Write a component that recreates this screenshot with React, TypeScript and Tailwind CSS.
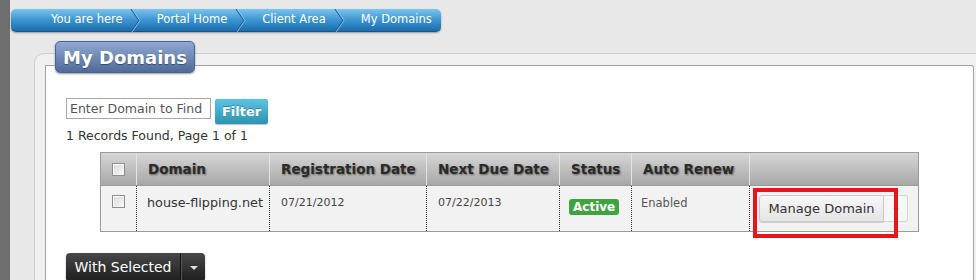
import React from "react";

const font = { fontFamily: '"DejaVu Sans", Verdana, sans-serif' };

function Chevron() {
  return (
    <svg width="14" height="23" viewBox="0 0 14 23" className="shrink-0">
      <polyline points="2,0 10,11.5 2,23" fill="none" stroke="#1a5b91" strokeWidth="1.2" />
      <polyline points="3,0 11,11.5 3,23" fill="none" stroke="#9fd3f2" strokeWidth="1" opacity="0.8" />
    </svg>
  );
}

function Checkbox() {
  return (
    <span className="inline-block h-[13px] w-[13px] border border-[#8f8f8f] bg-gradient-to-br from-[#d8d8d8] to-[#fafafa] shadow-[inset_1px_1px_0_#fff]" />
  );
}

const crumbs = ["Portal Home", "Client Area", "My Domains"];

const cols = [
  { label: "Domain", w: "w-[133px]" },
  { label: "Registration Date", w: "w-[157px]" },
  { label: "Next Due Date", w: "w-[133px]" },
  { label: "Status", w: "w-[72px]" },
  { label: "Auto Renew", w: "w-[118px]" },
  { label: "", w: "flex-1" },
];

export default function App() {
  return (
    <div className="flex h-[280px] w-[976px] overflow-hidden whitespace-nowrap bg-[#e8e8e8]" style={font}>
      <div className="w-[10px] shrink-0 bg-[#6e6e6e]" />
      <div className="flex min-w-0 flex-1 flex-col">
        {/* breadcrumb */}
        <div className="ml-px mt-[9px] flex h-[23px] items-center self-start rounded-[5px] border-b border-[#15558a] bg-gradient-to-b from-[#7cc5ec] via-[#3b95d2] to-[#1c6cab] pr-[2px] text-[11.5px] text-white shadow-[0_1px_2px_rgba(0,0,0,0.35)]">
          <span className="pl-[40px] pr-[6px]">You are here</span>
          <Chevron />
          {crumbs.map((c, i) => (
            <React.Fragment key={c}>
              <span className="pl-[14px] pr-[7px]">{c}</span>
              {i < crumbs.length - 1 && <Chevron />}
            </React.Fragment>
          ))}
        </div>

        {/* outer panel */}
        <div className="relative ml-[24px] mt-[21px] w-[980px] flex-1 rounded-tl-[10px] border border-[#cdcdcd] bg-[#f0f0f0] pl-[10px] pt-[11px]">
          <div className="absolute left-[20px] top-[-13px] flex h-[32px] w-[140px] items-center justify-center rounded-[5px] border border-[#4a6590] bg-gradient-to-b from-[#91a9d2] to-[#4f6b9b] text-[18px] font-bold text-white shadow-[0_1px_2px_rgba(0,0,0,0.4)] [text-shadow:0_1px_1px_rgba(0,0,0,0.4)]">
            My Domains
          </div>
          <div className="h-full w-[929px] rounded-tr-[3px] border-l border-r border-t border-[#a4a4a4] bg-white pl-[20px] pt-[32px]">
            {/* filter */}
            <div className="flex items-start gap-[4px]">
              <input
                placeholder="Enter Domain to Find"
                className="h-[21px] w-[145px] border border-[#a9a9a9] bg-white px-[3px] text-[12.5px] text-[#333] placeholder:text-[#555] outline-none"
              />
              <button className="mt-px h-[25px] w-[53px] rounded-[2px] bg-gradient-to-b from-[#5cc3e3] to-[#2d93b3] text-[13px] font-bold text-white shadow-[0_1px_1px_rgba(0,0,0,0.25)] [text-shadow:0_-1px_0_rgba(0,0,0,0.25)]">
                Filter
              </button>
            </div>
            <div className="mt-[3px] text-[12.5px] leading-[18px] text-[#333]">1 Records Found, Page 1 of 1</div>

            {/* table */}
            <div className="ml-[34px] mt-[7px] w-[819px] border border-[#9a9a9a]">
              <div className="flex h-[33px] border-b border-[#9a9a9a] bg-gradient-to-b from-[#d6d6d6] to-[#a8a8a8]">
                <div className="flex w-[36px] items-center justify-center border-r border-[#e4e4e4]">
                  <Checkbox />
                </div>
                {cols.map((c, i) => (
                  <div
                    key={i}
                    className={`${c.w} flex items-center px-[11px] text-[13.5px] font-bold text-[#2a2a2a] [text-shadow:1px_1px_2px_rgba(0,0,0,0.45)] ${i < cols.length - 1 ? "border-r border-[#e4e4e4]" : ""}`}
                  >
                    {c.label}
                  </div>
                ))}
              </div>
              <div className="flex h-[45px] bg-[#f2f2f2]">
                <div className="flex w-[36px] justify-center border-r border-dotted border-[#333] pt-[9px]">
                  <Checkbox />
                </div>
                <div className="w-[133px] border-r border-dotted border-[#333] pl-[10px] pt-[7px] text-[12.8px] text-[#333]">
                  house-flipping.net
                </div>
                <div className="w-[157px] border-r border-dotted border-[#333] pl-[11px] pt-[9px] text-[11px] text-[#444]">
                  07/21/2012
                </div>
                <div className="w-[133px] border-r border-dotted border-[#333] pl-[11px] pt-[9px] text-[11px] text-[#444]">
                  07/22/2013
                </div>
                <div className="w-[72px] border-r border-dotted border-[#333] pl-[9px] pt-[8px]">
                  <span className="inline-block rounded-[3px] bg-[#3fa33f] px-[4px] text-[12px] font-bold leading-[16px] text-white">
                    Active
                  </span>
                </div>
                <div className="w-[118px] border-r border-dotted border-[#333] pl-[9px] pt-[9px] text-[11.5px] text-[#555]">
                  Enabled
                </div>
                <div className="relative flex-1 pl-[9px] pt-[9px]">
                  <div className="flex h-[27px] w-[149px]">
                    <div className="flex w-[125px] items-center justify-center rounded-l-[3px] border border-[#c8c8c8] bg-gradient-to-b from-[#f7f7f7] to-[#e4e4e4] text-[13px] text-[#333] shadow-[0_1px_1px_rgba(0,0,0,0.15)]">
                      Manage Domain
                    </div>
                    <div className="flex w-[24px] items-center justify-center rounded-r-[3px] border border-l-0 border-[#d4d4d4] bg-[#f6f6f6]">
                      <span className="mt-px border-x-[3px] border-t-[3px] border-x-transparent border-t-[#c0c0c0]" />
                    </div>
                  </div>
                  <div className="absolute left-[3px] top-[2px] h-[50px] w-[145px] border-[4px] border-[#e8141c]" />
                </div>
              </div>
            </div>

            {/* with selected */}
            <div className="mt-[21px] flex h-[29px] w-[139px] rounded-[4px] bg-gradient-to-b from-[#474747] to-[#1e1e1e] text-white shadow-[0_1px_2px_rgba(0,0,0,0.3)]">
              <div className="flex w-[115px] items-center justify-center border-r border-[#111] text-[14px]">With Selected</div>
              <div className="flex flex-1 items-center justify-center border-l border-[#555]">
                <span className="border-x-[4px] border-t-[4px] border-x-transparent border-t-[#ddd]" />
              </div>
            </div>
          </div>
        </div>
      </div>
    </div>
  );
}
